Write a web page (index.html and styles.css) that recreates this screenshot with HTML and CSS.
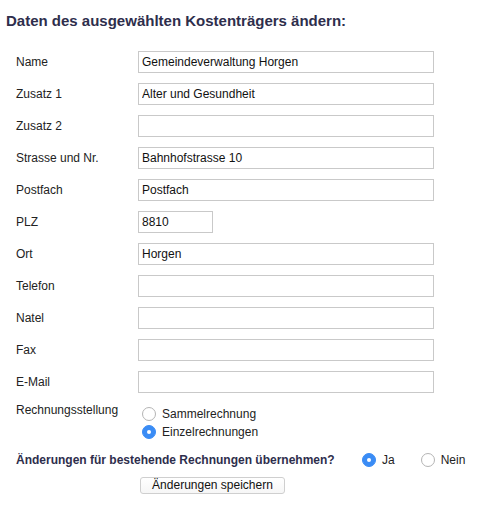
FILE: index.html
```html
<!DOCTYPE html>
<html lang="de">
<head>
<meta charset="utf-8">
<title>Kostenträger ändern</title>
<link rel="stylesheet" href="styles.css">
</head>
<body>
<h1 class="title">Daten des ausgewählten Kostenträgers ändern:</h1>
<form class="form">
  <label class="label">Name</label>
  <input class="field" type="text" value="Gemeindeverwaltung Horgen">
  <label class="label">Zusatz 1</label>
  <input class="field" type="text" value="Alter und Gesundheit">
  <label class="label">Zusatz 2</label>
  <input class="field" type="text" value="">
  <label class="label">Strasse und Nr.</label>
  <input class="field" type="text" value="Bahnhofstrasse 10">
  <label class="label">Postfach</label>
  <input class="field" type="text" value="Postfach">
  <label class="label">PLZ</label>
  <input class="field field-short" type="text" value="8810">
  <label class="label">Ort</label>
  <input class="field" type="text" value="Horgen">
  <label class="label">Telefon</label>
  <input class="field" type="text" value="">
  <label class="label">Natel</label>
  <input class="field" type="text" value="">
  <label class="label">Fax</label>
  <input class="field" type="text" value="">
  <label class="label">E-Mail</label>
  <input class="field" type="text" value="">
  <span class="label label-top">Rechnungsstellung</span>
  <div class="radio-group">
    <label class="radio-line"><input class="radio" type="radio" name="rs"><span>Sammelrechnung</span></label>
    <label class="radio-line"><input class="radio" type="radio" name="rs" checked><span>Einzelrechnungen</span></label>
  </div>
  <div class="question">
    <span class="question-text">Änderungen für bestehende Rechnungen übernehmen?</span>
    <label class="radio-inline radio-ja"><input class="radio" type="radio" name="ub" checked><span>Ja</span></label>
    <label class="radio-inline"><input class="radio" type="radio" name="ub"><span>Nein</span></label>
  </div>
  <div class="actions">
    <button class="button" type="button">Änderungen speichern</button>
  </div>
</form>
</body>
</html>
```

FILE: styles.css
```css
html, body {
  margin: 0;
  padding: 0;
  background: #ffffff;
}

body {
  font-family: "Liberation Sans", Arial, sans-serif;
  font-size: 12px;
  color: #222222;
  width: 490px;
  height: 522px;
  overflow: hidden;
}

.title {
  margin: 0;
  padding: 12px 6px 0;
  font-size: 15px;
  line-height: 18px;
  font-weight: bold;
  color: #2e2e4c;
}

.form {
  display: grid;
  grid-template-columns: 122px 1fr;
  row-gap: 10px;
  align-items: center;
  margin-top: 21px;
  padding-left: 16px;
}

.label {
  font-size: 12px;
  line-height: 15px;
  color: #222222;
}

.label-top {
  align-self: start;
}

.field {
  box-sizing: border-box;
  width: 296px;
  height: 22px;
  margin: 0;
  padding: 0 3px;
  border: 1px solid #c9c9c9;
  border-radius: 0;
  background: #ffffff;
  font-family: "Liberation Sans", Arial, sans-serif;
  font-size: 12px;
  color: #111111;
  outline: none;
}

.field-short {
  width: 75px;
}

.radio-group {
  display: flex;
  flex-direction: column;
  margin-top: 2px;
}

.radio-line,
.radio-inline {
  display: flex;
  align-items: center;
  height: 18px;
  font-size: 12px;
  color: #222222;
}

.radio-line .radio {
  margin-left: 4px;
}

.radio {
  appearance: none;
  -webkit-appearance: none;
  box-sizing: border-box;
  width: 14px;
  height: 14px;
  margin: 0 6px 0 0;
  border: 1px solid #b4b4b4;
  border-radius: 50%;
  background: #ffffff;
  position: relative;
  flex: none;
}

.radio:checked {
  border-color: #3a8cf5;
  background: #3a8cf5;
}

.radio:checked::after {
  content: "";
  position: absolute;
  left: 4px;
  top: 4px;
  width: 4px;
  height: 4px;
  border-radius: 50%;
  background: #ffffff;
}

.question {
  grid-column: 1 / 3;
  display: flex;
  align-items: center;
  height: 18px;
}

.question-text {
  width: 346px;
  font-weight: bold;
  color: #2e2e4c;
}

.radio-ja {
  margin-right: 26px;
}

.actions {
  grid-column: 2;
  margin-top: -2px;
}

.button {
  box-sizing: border-box;
  width: 145px;
  height: 17px;
  margin-left: 2px;
  padding: 0;
  border: 1px solid #cfcfcf;
  border-radius: 3px;
  background: linear-gradient(#ffffff, #f6f6f6);
  font-family: "Liberation Sans", Arial, sans-serif;
  font-size: 12px;
  line-height: 15px;
  color: #111111;
}
```
